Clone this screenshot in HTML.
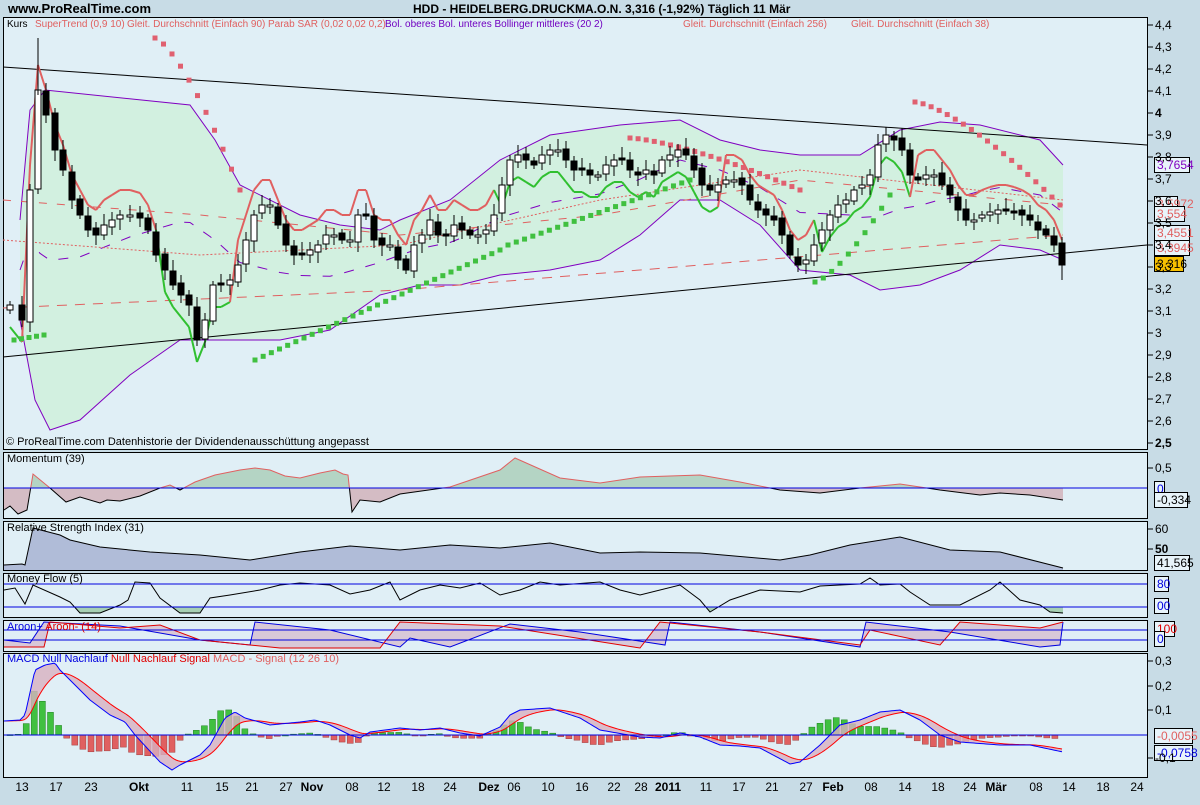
<!DOCTYPE html>
<html><head><meta charset="utf-8"><style>
body{margin:0;background:#c8dce6;width:1200px;height:800px;overflow:hidden;font-family:"Liberation Sans",sans-serif}
svg text{font-family:"Liberation Sans",sans-serif}
</style></head><body>
<svg id="s" width="1200" height="800" xmlns="http://www.w3.org/2000/svg">
<rect width="1200" height="800" fill="#c8dce6"/>
<text x="8" y="13" font-size="13" font-weight="bold">www.ProRealTime.com</text>
<text x="413" y="13" font-size="12" font-weight="bold">HDD - HEIDELBERG.DRUCKMA.O.N.   3,316 (-1,92%)   Täglich  11 Mär</text>
<g fill="#e0eff6" stroke="#000" stroke-width="1">
<rect x="3.5" y="17.5" width="1144" height="432"/>
<rect x="3.5" y="452.5" width="1144" height="66"/>
<rect x="3.5" y="521.5" width="1144" height="49"/>
<rect x="3.5" y="573.5" width="1144" height="44"/>
<rect x="3.5" y="620.5" width="1144" height="31"/>
<rect x="3.5" y="653.5" width="1144" height="124"/>
</g>
<g id="price"></g>
<g id="ind"></g>
<g font-size="10">
<text x="7" y="27">Kurs</text>
<text x="35" y="27" fill="#e06060">SuperTrend (0,9 10)</text>
<text x="127" y="27" fill="#e06060">Gleit. Durchschnitt (Einfach 90)</text>
<text x="268" y="27" fill="#e06060">Parab SAR (0,02 0,02 0,2)</text>
<text x="385" y="27" fill="#7000c0">Bol. oberes Bol. unteres Bollinger mittleres (20 2)</text>
<text x="683" y="27" fill="#e06060">Gleit. Durchschnitt (Einfach 256)</text>
<text x="851" y="27" fill="#e06060">Gleit. Durchschnitt (Einfach 38)</text>
</g>
<g font-size="11">
<text x="6" y="445">© ProRealTime.com  Datenhistorie der Dividendenausschüttung angepasst</text>
<text x="7" y="462">Momentum (39)</text>
<text x="7" y="531">Relative Strength Index (31)</text>
<text x="7" y="582">Money Flow (5)</text>
<text x="7" y="630" fill="#0000e0">Aroon+ <tspan fill="#e00000">Aroon- (14)</tspan></text>
<text x="7" y="662" fill="#0000e0">MACD Null Nachlauf <tspan fill="#e00000">Null Nachlauf Signal</tspan> <tspan fill="#e06060">MACD - Signal (12 26 10)</tspan></text>
</g>
<g id="axis" font-size="12"></g>
<g font-size="12" text-anchor="middle">
<text x="22" y="791">13</text><text x="56" y="791">17</text><text x="91" y="791">23</text><text x="139" y="791" font-weight="bold">Okt</text>
<text x="187" y="791">11</text><text x="222" y="791">15</text><text x="252" y="791">21</text><text x="286" y="791">27</text>
<text x="312" y="791" font-weight="bold">Nov</text><text x="352" y="791">08</text><text x="384" y="791">12</text><text x="418" y="791">18</text>
<text x="450" y="791">24</text><text x="489" y="791" font-weight="bold">Dez</text><text x="514" y="791">06</text><text x="548" y="791">10</text>
<text x="582" y="791">16</text><text x="614" y="791">22</text><text x="641" y="791">28</text><text x="668" y="791" font-weight="bold">2011</text>
<text x="706" y="791">11</text><text x="739" y="791">17</text><text x="772" y="791">21</text><text x="806" y="791">27</text>
<text x="833" y="791" font-weight="bold">Feb</text><text x="871" y="791">08</text><text x="905" y="791">14</text><text x="938" y="791">18</text>
<text x="970" y="791">24</text><text x="996" y="791" font-weight="bold">Mär</text><text x="1036" y="791">08</text><text x="1069" y="791">14</text>
<text x="1103" y="791">18</text><text x="1137" y="791">24</text>
</g>
</svg>
<script>
var NS="http://www.w3.org/2000/svg";
function el(p,t,a){var e=document.createElementNS(NS,t);for(var k in a)e.setAttribute(k,a[k]);document.getElementById(p).appendChild(e);return e;}
function pts(a){return a.map(function(p){return p[0]+","+p[1]}).join(" ");}
function interp(a,x){if(x<=a[0][0])return a[0][1];for(var i=1;i<a.length;i++){if(x<=a[i][0]){var t=(x-a[i-1][0])/(a[i][0]-a[i-1][0]);return a[i-1][1]+t*(a[i][1]-a[i-1][1]);}}return a[a.length-1][1];}
var ax=[["4,4",25],["4,3",47],["4,2",69],["4,1",91],["4",113],["3,9",135],["3,8",157],["3,7",179],["3,6",201],["3,5",223],["3,4",245],["3,3",267],["3,2",289],["3,1",311],["3",333],["2,9",355],["2,8",377],["2,7",399],["2,6",421],["2,5",443],
["0,5",468],["60",529],["50",549],["0,3",661],["0,2",686],["0,1",710],["-0,1",758]];
ax.forEach(function(a){el("axis","line",{x1:1148,x2:1153,y1:a[1],y2:a[1],stroke:"#000"});var t=el("axis","text",{x:1155,y:a[1]+4});t.textContent=a[0];if(a[0]=="4"||a[0]=="2,5"||a[0]=="50")t.setAttribute("font-weight","bold");});
var up=[[20,220],[30,110],[45,90],[190,105],[215,140],[240,185],[300,215],[340,225],[380,230],[400,220],[450,200],[500,160],[550,135],[620,125],[680,120],[720,140],[760,150],[800,155],[860,155],[900,130],[940,122],[980,125],[1040,140],[1063,165]];
var lo=[[20,320],[35,400],[50,430],[80,420],[130,375],[180,340],[230,340],[280,340],[330,330],[380,295],[420,285],[460,285],[500,275],[550,270],[600,260],[640,235],[680,200],[720,200],[760,225],[800,270],[850,275],[880,290],[920,285],[960,270],[1000,245],[1040,250],[1063,260]];
el("price","polygon",{points:pts(up.concat(lo.slice().reverse())),fill:"#d2f0e0"});
el("price","polyline",{points:pts(up),fill:"none",stroke:"#8000c0"});
el("price","polyline",{points:pts(lo),fill:"none",stroke:"#8000c0"});
var mid=[];for(var x=20;x<=1063;x+=10)mid.push([x,(interp(up,x)+interp(lo,x))/2]);
el("price","polyline",{points:pts(mid),fill:"none",stroke:"#8000c0","stroke-dasharray":"10,12"});
el("price","polyline",{points:"3,308 400,290 700,265 1063,235",fill:"none",stroke:"#e06060","stroke-dasharray":"10,8"});
el("price","polyline",{points:"3,200 200,215 400,235 600,215 800,180 1063,205",fill:"none",stroke:"#e06060","stroke-dasharray":"8,10"});
el("price","polyline",{points:"3,240 200,255 400,245 600,200 800,170 1063,200",fill:"none",stroke:"#e06060","stroke-dasharray":"2,2"});
el("price","line",{x1:3,y1:67,x2:1147,y2:145,stroke:"#000"});
el("price","line",{x1:3,y1:357,x2:1147,y2:245,stroke:"#000"});
var P=[[10,305],[22,320],[30,190],[38,90],[46,115],[55,150],[63,170],[72,200],[80,215],[88,230],[96,235],[104,225],[112,220],[120,215],[130,215],[140,218],[148,230],[156,255],[165,270],[173,285],[181,295],[189,305],[197,340],[205,320],[213,285],[221,285],[230,280],[238,265],[246,240],[254,215],[262,205],[270,205],[278,225],[286,245],[294,255],[302,255],[310,250],[318,245],[326,235],[334,235],[342,240],[350,240],[358,215],[366,215],[374,240],[382,245],[390,245],[398,260],[406,270],[414,245],[422,235],[430,220],[438,235],[446,235],[454,225],[462,230],[470,235],[478,235],[486,230],[494,215],[502,185],[510,160],[518,155],[526,160],[534,165],[542,155],[550,150],[558,150],[566,160],[574,170],[582,170],[590,175],[598,175],[606,165],[614,160],[622,160],[630,170],[638,175],[646,170],[654,175],[662,160],[670,155],[678,150],[686,155],[694,170],[702,185],[710,190],[718,185],[726,180],[734,180],[742,185],[750,200],[758,210],[766,215],[774,220],[782,235],[790,255],[798,265],[806,260],[814,245],[822,230],[830,215],[838,205],[846,200],[854,190],[862,185],[870,175],[878,145],[886,135],[894,140],[902,150],[910,175],[918,180],[926,175],[934,175],[942,185],[950,195],[958,210],[966,220],[974,220],[982,215],[990,212],[998,210],[1006,210],[1014,212],[1022,215],[1030,220],[1038,230],[1046,235],[1054,245],[1062,265]];
var st=[];P.forEach(function(p,i){var dn=i<2||(i>=18&&i<27)||(i>=60&&i<88)||(i>=100&&i<112);st.push([p[0],p[1]+(dn?22:-25),dn]);});
for(var i=1;i<st.length;i++)el("price","line",{x1:st[i-1][0],y1:st[i-1][1],x2:st[i][0],y2:st[i][1],stroke:st[i][2]?"#30c030":"#e06060","stroke-width":2});
// SAR segments
function sar(x0,x1,y0,y1,col,acc){var n=Math.round((x1-x0)/8.1);for(var k=0;k<=n;k++){var t=k/n;t=acc?Math.pow(t,1.4):t;var x=x0+(x1-x0)*k/n,y=y0+(y1-y0)*t;el("price","rect",{x:x-2.5,y:y-2.5,width:5,height:5,fill:col});}}
sar(14,44,340,335,"#40c040");
sar(155,240,38,190,"#e06070",true);
sar(255,500,360,250,"#40c040");
sar(508,690,245,180,"#40c040");
sar(630,800,138,190,"#e06070",true);
sar(815,890,282,195,"#40c040",true);
sar(915,1060,102,205,"#e06070",true);
P.forEach(function(p,i){var o=i?P[i-1][1]+((i*7)%5-2):p[1]+5,c=p[1];var hi=Math.min(o,c)-4-(i*13)%8,lw=Math.max(o,c)+4+(i*11)%8;
el("price","line",{x1:p[0],x2:p[0],y1:hi,y2:lw,stroke:"#000"});
var t=Math.min(o,c),h=Math.max(2,Math.abs(o-c));el("price","rect",{x:p[0]-3,y:t,width:6,height:h,fill:c>o?"#000":"#fff",stroke:"#000"});});
el("price","line",{x1:38,x2:38,y1:38,y2:95,stroke:"#000"});
el("price","line",{x1:1062,x2:1062,y1:258,y2:280,stroke:"#000"});
function box(x,y,w,txt,col,bg){el("ind","rect",{x:x+.5,y:y+.5,width:w,height:15,fill:bg||"#e8f4fa",stroke:"#000"});var t=el("ind","text",{x:x+3,y:y+12,fill:col,"font-size":"12"});t.textContent=txt;}
box(1154,157,35,"3,7654","#8000c0");box(1154,196,23,"3,5972","#e06060");box(1154,206,30,"3,554","#e06060");box(1154,225,35,"3,4551","#e06060");box(1154,240,35,"3,3945","#e06060");
box(1154,256,29,"3,316","#000","#f8c000");
box(1154,481,10,"0","#0000e0");box(1154,492,33,"-0,334","#000");box(1154,555,35,"41,565","#000");
box(1154,576,14,"80","#0000e0");box(1154,598,14,"00","#0000e0");box(1154,621,20,"100","#e00000");box(1154,631,10,"0","#0000e0");
box(1154,728,38,"-0,0055","#e06060");box(1154,745,38,"-0,0758","#0000e0");
var M=[[4,510],[10,506],[18,514],[27,510],[33,474],[50,488],[66,502],[80,497],[100,503],[107,500],[120,501],[140,496],[160,488],[170,485],[180,490],[195,482],[215,475],[240,470],[255,468],[270,470],[285,476],[300,478],[320,473],[335,470],[343,474],[348,475],[352,512],[360,500],[380,502],[400,494],[450,487],[500,470],[515,458],[560,478],[600,483],[640,477],[700,475],[740,482],[780,490],[820,493],[860,488],[900,484],[940,490],[980,495],[1000,493],[1030,495],[1063,500]];
var d=el("ind","defs",{});
var c1=document.createElementNS(NS,"clipPath");c1.id="ca";c1.innerHTML='<rect x="0" y="450" width="1200" height="38"/>';d.appendChild(c1);
var c2=document.createElementNS(NS,"clipPath");c2.id="cb";c2.innerHTML='<rect x="0" y="488" width="1200" height="40"/>';d.appendChild(c2);
var mp=pts([[4,488]].concat(M,[[1063,488]]));
el("ind","polygon",{points:mp,fill:"#b4d4c4","clip-path":"url(#ca)"});
el("ind","polygon",{points:mp,fill:"#d4bcc4","clip-path":"url(#cb)"});
el("ind","polyline",{points:pts(M),fill:"none",stroke:"#e06060","clip-path":"url(#ca)"});
el("ind","polyline",{points:pts(M),fill:"none",stroke:"#000","clip-path":"url(#cb)"});
el("ind","line",{x1:4,x2:1147,y1:488,y2:488,stroke:"#0000e0"});
var R=[[4,565],[22,564],[25,565],[33,528],[60,535],[70,540],[100,547],[150,552],[200,555],[250,560],[300,552],[350,546],[400,550],[450,545],[500,548],[550,543],[600,553],[640,552],[700,553],[780,560],[810,555],[850,545],[900,537],[950,550],[1000,552],[1063,568]];
el("ind","polygon",{points:pts(R.concat([[1063,570],[4,570]])),fill:"#b0bcd8"});
el("ind","polyline",{points:pts(R),fill:"none",stroke:"#000"});
var F=[[4,590],[15,588],[25,604],[33,585],[60,597],[70,602],[80,613],[100,613],[120,605],[128,600],[135,582],[150,583],[160,598],[180,613],[200,613],[210,598],[230,595],[260,590],[280,585],[300,583],[330,585],[350,594],[370,590],[390,582],[400,600],[420,590],[440,585],[460,588],[480,583],[500,595],[520,590],[540,582],[560,585],[600,582],[620,590],[640,595],[680,585],[700,600],[710,612],[730,600],[760,590],[800,592],[820,586],[860,584],[870,578],[880,585],[900,584],[910,592],[930,605],[960,605],[990,590],[1000,582],[1020,600],[1040,605],[1050,612],[1063,613]];
var c3=document.createElementNS(NS,"clipPath");c3.id="cc";c3.innerHTML='<rect x="0" y="607" width="1200" height="12"/>';d.appendChild(c3);
el("ind","polygon",{points:pts([[4,607]].concat(F,[[1063,607]])),fill:"#a8d0b4","clip-path":"url(#cc)"});
el("ind","polyline",{points:pts(F),fill:"none",stroke:"#000"});
el("ind","line",{x1:4,x2:1147,y1:584,y2:584,stroke:"#0000e0"});el("ind","line",{x1:4,x2:1147,y1:607,y2:607,stroke:"#0000e0"});
var AU=[[4,640],[30,643],[44,622],[120,626],[200,640],[250,645],[255,622],[330,630],[400,647],[410,638],[450,647],[510,624],[580,632],[665,645],[670,622],[760,632],[860,647],[866,622],[950,632],[1040,647],[1060,645],[1063,622]];
var AD=[[4,647],[44,647],[50,622],[120,628],[160,625],[200,640],[280,648],[380,648],[400,622],[500,626],[640,648],[660,622],[760,632],[860,645],[870,630],[940,645],[960,622],[1040,628],[1063,622]];
var au=[],ad=[];for(var x=4;x<=1063;x+=2){au.push([x,interp(AU,x)]);ad.push([x,interp(AD,x)]);}
el("ind","polygon",{points:pts(au.concat(ad.slice().reverse())),fill:"#d8c8d8"});
el("ind","polyline",{points:pts(AU),fill:"none",stroke:"#0000e0"});
el("ind","polyline",{points:pts(AD),fill:"none",stroke:"#e00000"});
el("ind","line",{x1:4,x2:1147,y1:630,y2:630,stroke:"#0000e0"});el("ind","line",{x1:4,x2:1147,y1:640,y2:640,stroke:"#0000e0"});
var MA=[[4,721],[20,720],[25,715],[35,670],[45,665],[55,663],[60,670],[75,685],[90,700],[110,715],[125,722],[135,735],[160,762],[172,770],[180,765],[200,755],[210,745],[225,718],[235,712],[245,718],[270,725],[300,722],[315,720],[330,725],[350,735],[360,738],[370,732],[400,728],[420,730],[440,728],[460,733],[480,736],[500,727],[510,715],[520,710],[550,708],[580,718],[600,730],[640,737],[660,738],[680,733],[700,737],[720,745],[740,746],[760,748],[790,764],[800,762],[820,745],[840,725],[860,720],[880,712],[900,710],[920,720],[940,735],[960,742],[1000,745],[1030,745],[1063,752]];
var mac=[],sig=[],s=721;for(var x=4;x<=1063;x+=2){var m=interp(MA,x);s=s+(m-s)*0.12;mac.push([x,m]);sig.push([x,s]);}
for(var x=10;x<=1063;x+=8.1){var i=Math.round((x-4)/2);var h=(mac[i][1]-sig[i][1])*-1.4;var pos=h>0;
el("ind","rect",{x:x-3,y:pos?735-h:735,width:6,height:Math.max(1,Math.abs(h)),fill:pos?"#40c040":"#e06060",stroke:pos?"#208020":"#a04040","stroke-width":.5});}
el("ind","polygon",{points:pts(mac.concat(sig.slice().reverse())),fill:"#d8b0c0",opacity:.8});
el("ind","polyline",{points:pts(sig),fill:"none",stroke:"#ff0000"});
el("ind","polyline",{points:pts(mac),fill:"none",stroke:"#0000ff"});
el("ind","line",{x1:4,x2:1147,y1:735,y2:735,stroke:"#0000e0"});
</script>
</body></html>
